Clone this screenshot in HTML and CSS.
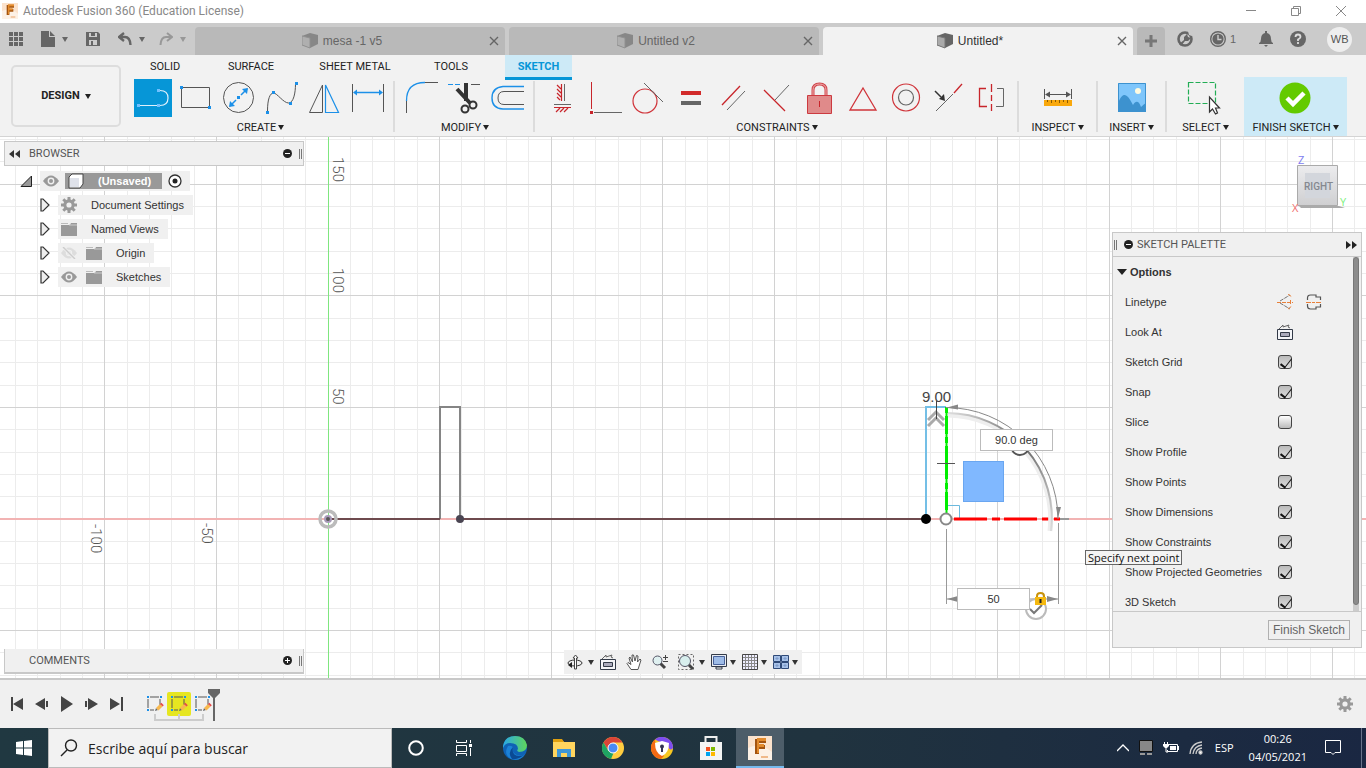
FILE: index.html
```html
<!DOCTYPE html>
<html lang="en">
<head>
  <meta charset="UTF-8" />
  <meta name="viewport" content="width=device-width, initial-scale=1.0"/>
  <title>Autodesk Fusion 360 (Education License)</title>
  <link rel="stylesheet" href="styles.css">
</head>
<body>
  <!-- shared icons -->
  <svg class="defs" width="0" height="0" aria-hidden="true">
    <symbol id="i-cube" viewBox="0 0 16 16">
      <path d="M0 3 8 0l8 2v9l-8 4-8-3z" fill="#666"/>
      <path d="M0 3l8 2v10l-8-3z" fill="#aaa" stroke="#777"/>
    </symbol>
    <symbol id="i-close" viewBox="0 0 10 10"><path d="M1 1l8 8M9 1L1 9" stroke="currentColor" stroke-width="1.4"/></symbol>
    <symbol id="i-eye" viewBox="0 0 16 12">
      <path d="M0 6Q8-5 16 6 8 17 0 6z" fill="#999"/><circle cx="8" cy="6" r="3.4" fill="#f0f0f0"/><circle cx="8" cy="6" r="2" fill="#999"/>
    </symbol>
    <symbol id="i-eye-off" viewBox="0 0 16 12">
      <path d="M0 6Q8-5 16 6 8 17 0 6z" fill="#ddd"/><circle cx="8" cy="6" r="3.2" fill="#f0f0f0"/><circle cx="8" cy="6" r="2" fill="#ddd"/><path d="M2 0l12 12" stroke="#f0f0f0" stroke-width="3"/><path d="M2 0l12 12" stroke="#ccc" stroke-width="1.4"/>
    </symbol>
    <symbol id="i-folder" viewBox="0 0 16 13"><path d="M0 2h9l1-2h6v13H0z" fill="#999"/><path d="M0 0h7v1H0z" fill="#bbb"/><path d="M8 2h8" stroke="#ccc"/></symbol>
    <symbol id="i-gear" viewBox="0 0 16 16">
      <path d="M8 0v16M0 8h16M2.3 2.3l11.4 11.4M13.7 2.3L2.3 13.7" stroke="#999" stroke-width="3"/><circle cx="8" cy="8" r="4.2" fill="none" stroke="#999" stroke-width="3"/><circle cx="8" cy="8" r="2.6" fill="#f0f0f0"/>
    </symbol>
    <symbol id="i-expand" viewBox="0 0 10 14"><path d="M1 1h2l6 6-6 6H1z" fill="#eee" stroke="#333" stroke-width="1.2"/></symbol>
    <symbol id="i-lookat" viewBox="0 0 16 16">
      <path d="M.5 5.5h15v10H.5z" fill="#f4f5f8" stroke="#333a48"/><path d="M3.500 8.500h9v4h-9z" fill="#aab" stroke="#333a48"/><path d="M2 5l4-4v2l6-2-1 2 2 1" fill="none" stroke="#666"/>
    </symbol>
    <symbol id="i-sketch" viewBox="0 0 18 18">
      <path d="M4 2h9M2 4v9M14 4v6M4 15h4" stroke="#555" fill="none"/>
      <path d="M1 1h2v2H1zM14 1h2v2h-2zM1 14h2v2H1z" fill="#1c90e8"/>
      <path d="M9 16l1-3 2 2z" fill="#666"/><path d="M10 13l4-4 2.5 2.5-4 4z" fill="#f8b84e"/><path d="M14 9l1.4-1.2 2.4 2.4-1.3 1.3z" fill="#e84a4a"/>
    </symbol>
    <symbol id="i-fusion" viewBox="0 0 24 24">
      <path d="M0 0h24v24H0z" fill="#fbe2cc"/><path d="M0 12q12-6 24 4v8H0z" fill="#fff" opacity=".5"/>
      <path d="M7 3h11v4h-7v2h6v4h-6v5H7z" fill="#a4540f"/><path d="M9 2h9v3h-7v3h5v3h-5v6H9z" fill="#e28a2c"/><path d="M13 20h7v2h-7z" fill="#f0b98a"/>
    </symbol>
  </svg>

  <header class="titlebar">
    <svg class="logo" width="16" height="16"><use href="#i-fusion"/></svg>
    <h1>Autodesk Fusion 360 (Education License)</h1>
    <div class="window-buttons">
      <button aria-label="Minimize"><svg width="12" height="12"><path d="M1 5.5h10" stroke="#888"/></svg></button>
      <button aria-label="Restore"><svg width="12" height="12"><path d="M1.5 3.5h7v7h-7zM3.5 3V1.5h7v7H9" fill="none" stroke="#888"/></svg></button>
      <button aria-label="Close"><svg width="12" height="12"><path d="M1 1l10 10M11 1L1 11" stroke="#888"/></svg></button>
    </div>
  </header>

  <nav class="tabstrip">
    <div class="quick">
      <button aria-label="Data panel"><svg width="14" height="14" fill="#666"><path d="M0 0h4v4H0zM5 0h4v4H5zM10 0h4v4h-4zM0 5h4v4H0zM5 5h4v4H5zM10 5h4v4h-4zM0 10h4v4H0zM5 10h4v4H5zM10 10h4v4h-4z"/></svg></button>
      <button aria-label="File"><svg width="14" height="16" fill="#666"><path d="M0 0h8v6h6v10H0zM9 0l5 5H9z"/></svg><i class="caret"></i></button>
      <button aria-label="Save"><svg width="14" height="14"><path d="M0 0h12l2 2v12H0z" fill="#666"/><path d="M3 1h8v4H3zM3 8h8v5H3z" fill="#ccc"/><path d="M5 1h4v3H5zM5 9h2v4H5z" fill="#666"/></svg></button>
      <button aria-label="Undo"><svg width="14" height="14"><path d="M6 1L1 5l5 4M1 5h6q5 0 5.5 8" fill="none" stroke="#666" stroke-width="2.4"/></svg><i class="caret"></i></button>
      <button class="faded" aria-label="Redo"><svg width="14" height="14"><path d="M8 1l5 4-5 4M13 5H7Q2 5 1.5 13" fill="none" stroke="#666" stroke-width="2"/></svg><i class="caret"></i></button>
    </div>
    <div class="tabs">
      <div class="tab"><a href="#"><svg width="16" height="16"><use href="#i-cube"/></svg>mesa -1 v5</a><button aria-label="Close mesa -1 v5"><svg width="10" height="10"><use href="#i-close"/></svg></button></div>
      <div class="tab"><a href="#"><svg width="16" height="16"><use href="#i-cube"/></svg>Untitled v2</a><button aria-label="Close Untitled v2"><svg width="10" height="10"><use href="#i-close"/></svg></button></div>
      <div class="tab active"><a href="#"><svg width="16" height="16"><use href="#i-cube"/></svg>Untitled*</a><button aria-label="Close Untitled"><svg width="10" height="10"><use href="#i-close"/></svg></button></div>
      <button class="new-tab" aria-label="New design"><svg width="14" height="14"><path d="M7 1v12M1 7h12" stroke="#777" stroke-width="3"/></svg></button>
    </div>
    <div class="account">
      <button aria-label="Extensions"><svg width="16" height="16"><circle cx="8" cy="8" r="6.5" fill="none" stroke="#666" stroke-width="2.6"/><path d="M2 13l5-4V6l3-3 1 3 3 1-3 3H8l-4 5z" fill="#666"/><path d="M11 0l5 1-1 4-3-1z" fill="#cbcbcb"/></svg></button>
      <button aria-label="Job status"><svg width="16" height="16"><circle cx="8" cy="8" r="7.3" fill="none" stroke="#666" stroke-width="1.4"/><circle cx="8" cy="8" r="5.6" fill="#666"/><path d="M8 4v4.5h3.5" fill="none" stroke="#ccc" stroke-width="1.4"/></svg>1</button>
      <button class="bell" aria-label="Notifications"><svg width="14" height="16" fill="#666"><path d="M6 0h2v2q4 1 4 6 0 3 2 4v1H0v-1q2-1 2-4 0-5 4-6zM5 14h4l-2 2z"/></svg></button>
      <button aria-label="Help"><svg width="16" height="16"><circle cx="8" cy="8" r="8" fill="#666"/><path d="M5.5 6q0-2.500 2.500-2.500T10.500 6Q10.500 7 8 8.500V10M8 11v2" fill="none" stroke="#ddd" stroke-width="1.8"/></svg></button>
      <button class="avatar">WB</button>
    </div>
  </nav>

  <section class="ribbon">
    <button class="workspace">DESIGN<i class="caret"></i></button>
    <div class="ribbon-main">
      <nav class="ribbon-tabs">
        <a href="#" class="w-solid">SOLID</a>
        <a href="#" class="w-surface">SURFACE</a>
        <a href="#" class="w-metal">SHEET METAL</a>
        <a href="#" class="w-tools">TOOLS</a>
        <a href="#" class="current">SKETCH</a>
      </nav>
      <div class="groups">
        <div class="group">
          <div class="tools">
            <button class="on" aria-label="Line"><svg width="38" height="38"><path d="M6 26.500h17M26 11.500q8 0 8 7.500t-8 7.500" fill="none" stroke="#dff0fb" stroke-width="1.2"/><path d="M3 25h3v3H3zM23 25h3v3h-3zM23 10h3v3h-3z" fill="#6fc0ff"/></svg></button>
            <button aria-label="Rectangle"><svg width="38" height="38"><path d="M4.5 8.500h28v20h-28z" fill="none" stroke="#555"/><path d="M3 7h3v3H3zM31 27h3v3h-3z" fill="#1c90e8"/></svg></button>
            <button aria-label="Circle"><svg width="38" height="38"><circle cx="18.500" cy="18.500" r="15" fill="none" stroke="#555"/><path d="M10 27l6-6M21 16l6-6" stroke="#1c90e8" stroke-width="1.500"/><path d="M9 28l1-6 5 5zM28 9l-1 6-5-5zM17 17h3v3h-3z" fill="#1c90e8"/></svg></button>
            <button aria-label="Spline"><svg width="38" height="38"><path d="M4.5 32C4.500 20 7 14 10.500 14s10 10 15 10 7-10 7-19" fill="none" stroke="#555"/><path d="M3 32h3v3H3zM9 12h3v3H9zM26 23h3v3h-3zM32 3h3v3h-3z" fill="#1c90e8"/></svg></button>
            <button aria-label="Mirror"><svg width="38" height="38" fill="none"><path d="M16.5 6v27.500h-13z" stroke="#555"/><path d="M19.500 6v27.500h13z" stroke="#1c90e8" stroke-width="1.2"/></svg></button>
            <button aria-label="Sketch dimension"><svg width="38" height="38"><path d="M3.5 5v28M34.500 5v28" stroke="#555"/><path d="M6 13.500h26" stroke="#1c90e8" stroke-width="1.500"/><path d="M4 13.500l4-3v6zM34 13.500l-4-3v6z" fill="#1c90e8"/></svg></button>
          </div>
          <button class="group-name">CREATE<i class="caret"></i></button>
        </div>
        <i class="sep"></i>
        <div class="group">
          <div class="tools">
            <button aria-label="Fillet"><svg width="38" height="38" fill="none"><path d="M3.5 34V22M22 3.500h13" stroke="#555"/><path d="M3.500 22q0-18.500 18.500-18.500" stroke="#1c90e8" stroke-width="1.300"/></svg></button>
            <button aria-label="Trim"><svg width="38" height="38" fill="none"><path d="M2 5.500h13" stroke="#1c90e8" stroke-dasharray="5 2"/><path d="M25 5.500h9" stroke="#555"/><path d="M20 4v18M11 10l13 14" stroke="#333" stroke-width="4"/><circle cx="19" cy="30" r="3.500" stroke="#333" stroke-width="2"/><circle cx="27" cy="26" r="3.500" stroke="#333" stroke-width="2"/></svg></button>
            <button aria-label="Offset"><svg width="38" height="38" fill="none"><path d="M35 7.500H14q-11 1-11 11.500t11 11h21" stroke="#1c90e8" stroke-width="1.400"/><path d="M35 12.500H15q-6 0-6 6.500t6 6.500h20" stroke="#555"/></svg></button>
          </div>
          <button class="group-name">MODIFY<i class="caret"></i></button>
        </div>
        <i class="sep"></i>
        <div class="group">
          <div class="tools">
            <button aria-label="Horizontal/Vertical"><svg width="38" height="38" fill="none"><path d="M18.5 5v17M14 6l4 4M14 10l4 4M14 14l4 4M14 18l3 3M11 28.500h17M13 33l4-4M17 33l4-4M21 33l4-4" stroke="#c8252b" stroke-width="1.200"/><path d="M21.500 5v17M11 25.500h17" stroke="#666"/></svg></button>
            <button aria-label="Coincident"><svg width="38" height="38" fill="none"><path d="M5.5 3v27" stroke="#c8252b"/><path d="M4 32h3v3H4z" fill="#c8252b"/><path d="M8 33.500h28" stroke="#666"/></svg></button>
            <button aria-label="Tangent"><svg width="38" height="38" fill="none"><circle cx="16" cy="22" r="12" stroke="#d0343a" stroke-width="1.200"/><path d="M15 4l19 19" stroke="#666"/></svg></button>
            <button aria-label="Equal"><svg width="38" height="38"><path d="M9 12h20v4H9z" fill="#d22b2b"/><path d="M9 22h20v4H9z" fill="#666"/></svg></button>
            <button aria-label="Parallel"><svg width="38" height="38"><path d="M7 26L25 7" stroke="#c8252b" stroke-width="1.300"/><path d="M12 31l18-19" stroke="#666"/></svg></button>
            <button aria-label="Perpendicular"><svg width="38" height="38"><path d="M6 11l21 21" stroke="#c8252b" stroke-width="1.300"/><path d="M17 21L31 6" stroke="#666"/></svg></button>
            <button aria-label="Fix"><svg width="38" height="38"><path d="M12 17v-6q0-6 6.500-6t6.500 6v6" fill="none" stroke="#d0444a" stroke-width="3"/><path d="M12 17v-6q0-6 6.500-6t6.500 6v6" fill="none" stroke="#f0b0b0"/><path d="M6.500 16.500h24v18h-24z" fill="#e08a8a" stroke="#cc3a40"/><path d="M18.500 22v6" stroke="#c8252b"/></svg></button>
            <button aria-label="Midpoint"><svg width="38" height="38"><path d="M19 9l13 22H6z" fill="none" stroke="#d0343a" stroke-width="1.300"/></svg></button>
            <button aria-label="Concentric"><svg width="38" height="38" fill="none"><circle cx="19" cy="18.500" r="13.500" stroke="#d0343a" stroke-width="1.200"/><circle cx="19" cy="18.500" r="7.500" stroke="#666" stroke-width="1.200"/></svg></button>
            <button aria-label="Collinear"><svg width="38" height="38"><path d="M6 32l17-17" stroke="#666"/><path d="M24 14l8-9" stroke="#c8252b" stroke-width="1.300"/><path d="M5 12l6 6" stroke="#333" stroke-width="1.500"/><path d="M15 22l-1-7-5 5z" fill="#333"/></svg></button>
            <button aria-label="Symmetry"><svg width="38" height="38" fill="none"><path d="M13 9.500H6.500v18H14M18.500 5v8M18.500 16v6M18.500 25v7" stroke="#c8252b" stroke-width="1.300"/><path d="M24 9.500h6.500v18H23" stroke="#666"/></svg></button>
          </div>
          <button class="group-name">CONSTRAINTS<i class="caret"></i></button>
        </div>
        <i class="sep"></i>
        <div class="group single">
          <div class="tools"><button aria-label="Measure"><svg width="38" height="38"><path d="M5.500 10v10M32.500 10v10M8 15.500h22" stroke="#555"/><path d="M6 15.500l5-3v6zM32 15.500l-5-3v6z" fill="#555"/><path d="M5 21h28v6H5z" fill="#f9a80c"/><path d="M8.500 21v2M12.500 21v3M16.500 21v2M20.500 21v3M24.500 21v2M28.500 21v3" stroke="#8a5a00"/></svg></button></div>
          <button class="group-name">INSPECT<i class="caret"></i></button>
        </div>
        <i class="sep"></i>
        <div class="group single narrow">
          <div class="tools"><button aria-label="Insert image"><svg width="38" height="38"><path d="M5 4h28v29H5z" fill="#7fc6fb"/><circle cx="25" cy="12" r="3" fill="#fffbe0"/><path d="M5 24c5-12 9-10 15 2 3-5 6-4 8 2q3-3 5-4v9H5z" fill="#3d92cf"/><path d="M5.500 4.500h27v28h-27z" fill="none" stroke="#3d92cf"/></svg></button></div>
          <button class="group-name">INSERT<i class="caret"></i></button>
        </div>
        <i class="sep"></i>
        <div class="group single">
          <div class="tools"><button aria-label="Select"><svg width="38" height="38"><path d="M1.500 3.500h27v21h-27z" fill="none" stroke="#22ad55" stroke-width="1.200" stroke-dasharray="5 2"/><path d="M22.500 18v15l3-3 3 5 2-1-2-5h4z" fill="#fff" stroke="#333" stroke-width="1.200"/></svg></button></div>
          <button class="group-name">SELECT<i class="caret"></i></button>
        </div>
        <div class="group single finish">
          <div class="tools"><button aria-label="Finish"><svg width="38" height="38"><circle cx="18" cy="19" r="15.500" fill="#63ca00"/><path d="M10 19l6 6L27 14" fill="none" stroke="#fff" stroke-width="4.500"/></svg></button></div>
          <button class="group-name">FINISH SKETCH<i class="caret"></i></button>
        </div>
      </div>
    </div>
  </section>

  <main class="canvas">
    <svg class="drawing" width="100%" height="100%">
      <defs>
        <linearGradient id="arc" x1="0" y1="0" x2="1" y2="1">
          <stop offset="0" stop-color="#ddd"/><stop offset=".5" stop-color="#666"/><stop offset="1" stop-color="#ddd"/>
        </linearGradient>
      </defs>
      <g id="grid"></g>
      <!-- model space, origin in the middle of the origin marker -->
      <g transform="translate(328 382)" fill="none">
        <path d="M-328 0H3000" stroke="#f2b3b3" stroke-width="2"/>
        <path d="M.5-382V2000" stroke="#7fe67f"/>
        <g class="ruler">
          <text transform="translate(5 -362) rotate(90)">150</text>
          <text transform="translate(5 -251) rotate(90)">100</text>
          <text transform="translate(5 -131) rotate(90)">50</text>
          <text transform="translate(-237 5) rotate(90)">-100</text>
          <text transform="translate(-126 4) rotate(90)">-50</text>
        </g>
        <path d="M112 0v-112h20V0" stroke="#858585" stroke-width="2"/>
        <path d="M0 0h112M132 0h466" stroke="#6e4a4e" stroke-width="2"/>
        <circle r="8" stroke="#bbb" stroke-width="3.500"/><circle r="3" fill="#555" stroke="#a79ab8" stroke-width="2"/>
        <circle cx="132" r="4" fill="#4a4552"/>

        <path d="M598 0v-112h20" stroke="#74bfe6" stroke-width="2"/>
        <path d="M618-13.500h13.500V0" stroke="#6cb9dd"/>
        <rect x="635.500" y="-57.500" width="40" height="40" fill="#80b8ff" stroke="#6aa6f0"/>
        <path d="M618.500-112V0" stroke="#0e0" stroke-width="3" stroke-dasharray="6 3 18 3 6 3 33 4"/>
        <path d="M618.500-112V0" stroke="#0e0" stroke-width="2"/>
        <path d="M609-55.500h18" stroke="#555"/>
        <path d="M732 0h9" stroke="#999" stroke-width="2"/>
        <path d="M626 0h106" stroke="#f00" stroke-width="3" stroke-dasharray="33 5 8 4"/>
        <circle cx="598" r="5" fill="#000"/>
        <circle cx="618" r="5.500" fill="#fff" stroke="#888" stroke-width="2"/>

        <!-- angle dimension -->
        <path d="M618-111.500A112 112 0 0 1 730 0" stroke="#888"/>
        <path d="M620-104A104 104 0 0 1 722 12" stroke="#eee" stroke-width="5"/>
        <path d="M620-106A105 105 0 0 1 723 12" stroke="url(#arc)" stroke-width="2"/>
        <path d="M619-111.500l11-3v5zM730-1l-2-11h5z" fill="#888"/>
        <circle cx="692" cy="-73" r="9" fill="#fff" stroke="#555" stroke-width="2"/>
        <path d="M600-93l8-8 8 8M600-99l8-8 8 8" stroke="#aaa" stroke-width="3"/>
        <path d="M608.500-118v18" stroke="#444"/>
        <text class="dim" x="594" y="-117">9.00</text>

        <!-- length dimension -->
        <path d="M618.500 10v75M730.500 4v81M618 80h112" stroke="#999"/>
        <path d="M619 80l11-3v6zM730 80l-11-3v6z" fill="#888"/>
        <circle cx="708" cy="90" r="10" fill="#fff" stroke="#bbb" stroke-width="2"/>
        <path d="M702 90l4 4 8-8" stroke="#777" stroke-width="2"/>
        <path d="M709 79v-2q0-3 3.500-3t3.500 3v2" stroke="#c8920a" stroke-width="2"/>
        <path d="M707 78h11v8h-11z" fill="#f5b90f"/><path d="M712.500 80v4" stroke="#222" stroke-width="2"/>
      </g>
    </svg>
    <input class="value angle" type="text" value="90.0 deg" aria-label="Angle">
    <input class="value length" type="text" value="50" aria-label="Length">

    <div class="left">
      <section class="browser">
        <header class="panel-bar">
          <svg width="11" height="8"><path d="M5 0v8L0 4zM11 0v8L6 4z" fill="#333"/></svg>
          <h2>BROWSER</h2>
          <svg width="9" height="9"><circle cx="4.500" cy="4.500" r="4.500" fill="#222"/><path d="M2 4.500h5" stroke="#fff"/></svg>
          <i class="grip"></i>
        </header>
        <ul class="tree">
          <li class="root">
            <svg width="12" height="12"><path d="M11.500 1v10.500H1z" fill="#999" stroke="#222"/></svg>
            <span><svg width="16" height="12"><use href="#i-eye"/></svg><b><svg width="16" height="16"><path d="M1 4l3-3h11v10l-3 4H1z" fill="#fff" stroke="#444"/><path d="M2 5h9v9H2z" fill="#dfe2ea"/></svg>(Unsaved)</b><svg width="14" height="14"><circle cx="7" cy="7" r="6" fill="#fff" stroke="#333" stroke-width="1.300"/><circle cx="7" cy="7" r="2.500" fill="#222"/></svg></span>
          </li>
          <li><svg width="10" height="14"><use href="#i-expand"/></svg><span><svg width="16" height="16"><use href="#i-gear"/></svg><em>Document Settings</em></span></li>
          <li><svg width="10" height="14"><use href="#i-expand"/></svg><span><svg width="16" height="13"><use href="#i-folder"/></svg><em>Named Views</em></span></li>
          <li><svg width="10" height="14"><use href="#i-expand"/></svg><span><svg width="16" height="12"><use href="#i-eye-off"/></svg><svg width="16" height="13"><use href="#i-folder"/></svg><em>Origin</em></span></li>
          <li><svg width="10" height="14"><use href="#i-expand"/></svg><span><svg width="16" height="12"><use href="#i-eye"/></svg><svg width="16" height="13"><use href="#i-folder"/></svg><em>Sketches</em></span></li>
        </ul>
      </section>
      <section class="panel-bar comments">
        <h2>COMMENTS</h2>
        <svg width="9" height="9"><circle cx="4.500" cy="4.500" r="4.500" fill="#222"/><path d="M2 4.500h5M4.500 2v5" stroke="#fff"/></svg>
        <i class="grip"></i>
      </section>
    </div>

    <div class="navbar">
      <button aria-label="Orbit"><svg width="16" height="16" fill="none"><ellipse cx="8" cy="9" rx="7" ry="3" stroke="#333"/><path d="M7.500 15V4H6l2.500-3L11 4H9.500v11z" fill="#fff" stroke="#444"/><path d="M1 11l4-3v6z" fill="#222"/></svg><i class="caret"></i></button>
      <button class="plain" aria-label="Look at"><svg width="16" height="16"><use href="#i-lookat"/></svg></button>
      <button class="plain" aria-label="Pan"><svg width="16" height="16"><path d="M5 15.500L1 9.500l1-1 3 2L3 4l1-1 2.500 5L6 1h1.500L9 7l1.500-5.500 1.500.5-.5 6L14 5l1 1-3 9.500z" fill="#fff" stroke="#555"/></svg></button>
      <button class="plain" aria-label="Zoom"><svg width="16" height="16"><path d="M8 9l5 5" stroke="#444" stroke-width="3"/><circle cx="5.500" cy="6.500" r="4.500" fill="#dff0f0" stroke="#556"/><path d="M11 3.500h5M13.500 1v5M11 7.500h5" stroke="#444"/></svg></button>
      <button aria-label="Fit"><svg width="16" height="16"><path d="M.5.5h15v15H.5z" fill="none" stroke="#666" stroke-dasharray="2 2"/><path d="M10 10l5 5" stroke="#444" stroke-width="3"/><circle cx="7" cy="7" r="5.500" fill="#d8efee" stroke="#556"/></svg><i class="caret"></i></button>
      <button class="tight" aria-label="Display settings"><svg width="16" height="16"><path d="M.5.5h15v12H.5z" fill="#e8ecf2" stroke="#333a48"/><path d="M2.500 2.500h11v8h-11z" fill="#9ebce8" stroke="#48629a"/><path d="M5 13h6v2H5z" fill="#fff" stroke="#333a48"/></svg><i class="caret"></i></button>
      <button class="tight" aria-label="Grid and snaps"><svg width="16" height="16"><path d="M.5.5h15v15H.5z" fill="#eef" stroke="#444"/><path d="M3.500 1v14M6.500 1v14M9.500 1v14M12.500 1v14M1 3.500h14M1 6.500h14M1 9.500h14M1 12.500h14" stroke="#888"/></svg><i class="caret"></i></button>
      <button class="tight" aria-label="Viewports"><svg width="16" height="14" fill="#a8c2e8" stroke="#2f4a78"><path d="M.5.5h7v6h-7zM8.500.5h7v6h-7zM.5 7.500h7v6h-7zM8.500 7.500h7v6h-7z"/><path d="M3 3h2v1H3zM11 3h2v1h-2zM3 10h2v1H3zM11 10h2v1h-2z" stroke="#7a98c8"/></svg><i class="caret"></i></button>
    </div>

    <div class="right">
      <svg class="viewcube" width="64" height="64">
        <defs><linearGradient id="cube" x2="0" y2="1"><stop stop-color="#ececee"/><stop offset="1" stop-color="#cfcfd1"/></linearGradient></defs>
        <path d="M12 56h40l6 2H14z" fill="#aaa"/>
        <path d="M10.500 15.500h40v40h-40z" fill="url(#cube)" stroke="#aaa"/>
        <path d="M18 23h25v25H18z" fill="#d3d6dc"/>
        <text x="17" y="40" class="face">RIGHT</text>
        <text x="11" y="14" fill="#8080f0">Z</text><text x="5" y="62" fill="#f07070">X</text><text x="53" y="56" fill="#80f080">Y</text>
      </svg>
      <section class="palette">
        <header>
          <i class="grip"></i>
          <svg width="9" height="9"><circle cx="4.500" cy="4.500" r="4.500" fill="#222"/><path d="M2 4.500h5" stroke="#fff"/></svg>
          <h2>SKETCH PALETTE</h2>
          <svg width="11" height="8"><path d="M0 0v8l5-4zM6 0v8l5-4z" fill="#222"/></svg>
        </header>
        <div class="palette-body">
          <div class="rows">
            <h3><i></i>Options</h3>
            <div class="row"><span>Linetype</span>
              <button aria-label="Construction"><svg width="16" height="16" fill="none"><path d="M3 7l10-6M3 9l10 6" stroke="#777" stroke-dasharray="4 1"/><path d="M0 8.500h16M13.500 6v5M11 0l4 3M11 15l4-3" stroke="#e8803a" stroke-dasharray="4 1"/></svg></button>
              <button aria-label="Centerline"><svg width="16" height="16" fill="none"><path d="M1.500 6V4q0-3 3-3H10v2h4.500v3M1.500 10v2q0 3 3 3H10v-2h4.500v-3" stroke="#555" stroke-width="1.200"/><path d="M0 8.500h16" stroke="#e8803a" stroke-dasharray="5 1 3 1"/></svg></button>
            </div>
            <div class="row"><span>Look At</span><button aria-label="Look At"><svg width="16" height="16"><use href="#i-lookat"/></svg></button></div>
            <div class="row"><label for="o-grid">Sketch Grid</label><input id="o-grid" type="checkbox" checked></div>
            <div class="row"><label for="o-snap">Snap</label><input id="o-snap" type="checkbox" checked></div>
            <div class="row"><label for="o-slice">Slice</label><input id="o-slice" type="checkbox"></div>
            <div class="row"><label for="o-profile">Show Profile</label><input id="o-profile" type="checkbox" checked></div>
            <div class="row"><label for="o-points">Show Points</label><input id="o-points" type="checkbox" checked></div>
            <div class="row"><label for="o-dims">Show Dimensions</label><input id="o-dims" type="checkbox" checked></div>
            <div class="row"><label for="o-cons">Show Constraints</label><input id="o-cons" type="checkbox" checked></div>
            <div class="row"><label for="o-proj">Show Projected Geometries</label><input id="o-proj" type="checkbox" checked></div>
            <div class="row"><label for="o-3d">3D Sketch</label><input id="o-3d" type="checkbox" checked></div>
          </div>
          <div class="scroll"><i></i></div>
        </div>
        <footer><button>Finish Sketch</button></footer>
      </section>
    </div>
    <div class="tooltip" role="tooltip">Specify next point</div>
  </main>

  <section class="timeline">
    <div class="playback">
      <button aria-label="Start"><svg width="14" height="14" fill="#444"><path d="M1 0h2v14H1zM13 1v12L3 7z"/></svg></button>
      <button aria-label="Step back"><svg width="14" height="14" fill="#444"><path d="M10 1v12L0 7zM11 4h2v6h-2z"/></svg></button>
      <button aria-label="Play"><svg width="14" height="16" fill="#444"><path d="M1 0v16l12-8z"/></svg></button>
      <button aria-label="Step forward"><svg width="14" height="14" fill="#444"><path d="M0 4h2v6H0zM3 1v12l10-6z"/></svg></button>
      <button aria-label="End"><svg width="14" height="14" fill="#444"><path d="M0 1v12l10-6zM11 0h2v14h-2z"/></svg></button>
    </div>
    <div class="features">
      <button aria-label="Sketch 1"><svg width="18" height="18"><use href="#i-sketch"/></svg></button>
      <button class="picked" aria-label="Sketch 2"><svg width="18" height="18"><use href="#i-sketch"/></svg></button>
      <button aria-label="Sketch 3"><svg width="18" height="18"><use href="#i-sketch"/></svg></button>
      <svg class="bracket" width="50" height="8"><path d="M1 0v6h48V0M25 0v6" fill="none" stroke="#ccc" stroke-width="2"/></svg>
      <svg class="marker" width="12" height="32"><path d="M0 0h12v4L7 9v23H5V9L0 4z" fill="#666"/></svg>
    </div>
    <button class="settings" aria-label="Timeline settings"><svg width="16" height="16"><use href="#i-gear"/></svg></button>
  </section>

  <footer class="taskbar">
    <button class="start" aria-label="Start menu"><svg width="16" height="16" fill="#fff"><path d="M0 2l7-1v6.500H0zM8 1l8-1v7.500H8zM0 8.500h7V15l-7-1zM8 8.500h8V16l-8-1z"/></svg></button>
    <div class="search">
      <svg width="18" height="18" fill="none" stroke="#222" stroke-width="1.400"><circle cx="11" cy="6.500" r="5.500"/><path d="M7 11l-6 6"/></svg>
      <input type="text" placeholder="Escribe aquí para buscar" aria-label="Buscar">
    </div>
    <div class="system">
      <button aria-label="Cortana"><svg width="16" height="16"><circle cx="8" cy="8" r="6.800" fill="none" stroke="#fff" stroke-width="2"/></svg></button>
      <button aria-label="Task view"><svg width="16" height="16" fill="none" stroke="#fff"><path d="M.5 0v2.500h10V0M.5 5.500h10v6H.5zM.5 16v-2.500h10V16M14.500 0v3M14.500 8v8"/><path d="M13 4h3v3h-3z" fill="#fff" stroke="none"/></svg></button>
    </div>
    <div class="apps">
      <button aria-label="Edge"><svg width="24" height="24"><defs><linearGradient id="edge"><stop stop-color="#2aa8e8"/><stop offset="1" stop-color="#5fd65a"/></linearGradient></defs><circle cx="12" cy="12" r="12" fill="#0f62b5"/><path d="M0 10Q2 0 12 0t12 9q0 7-8 7-3-1-1-3 0-6-8-6-5 0-7 5z" fill="url(#edge)"/><path d="M5 10Q0 18 8 23q9 3 14-5-5 3-10 0-4-3-2-7-3-2-5-1z" fill="#1c82d6"/><path d="M10 11q-2 8 6 9 4 0 6-2-6 6-13 5-5-6 1-12z" fill="#0a4a94"/></svg></button>
      <button aria-label="Explorer"><svg width="22" height="18"><path d="M0 1h9l2 2h11v15H0z" fill="#ffd55e"/><path d="M0 0h9l2 3H0z" fill="#e0a010"/><path d="M4 18V10h14v8h-4v-4H8v4z" fill="#3e97d8"/></svg></button>
      <button aria-label="Chrome"><svg width="22" height="22"><circle cx="11" cy="11" r="11" fill="#ffcd40"/><path d="M1.500 5.500a11 11 0 0 1 19 0H11L6 13z" fill="#db4437"/><path d="M1.500 5.500L6.500 14l5 2-2.500 6A11 11 0 0 1 1.500 5.500z" fill="#1fa463"/><circle cx="11" cy="11" r="5" fill="#4a8af4" stroke="#fff"/></svg></button>
      <button aria-label="Secure browser"><svg width="22" height="22"><circle cx="11" cy="11" r="11" fill="#f8c822"/><path d="M4 2.500A11 11 0 0 1 22 11q-3 4-5-2z" fill="#7d4df0"/><path d="M4 2.500A11 11 0 0 0 10 22l3-3-8-8z" fill="#f46a14"/><path d="M11 4l7 2q0 10-7 13Q4 16 4 6z" fill="#fff"/><circle cx="11" cy="9.500" r="2" fill="#335"/><path d="M10 10h2v5h-2z" fill="#335"/></svg></button>
      <button aria-label="Store"><svg width="24" height="24"><path d="M6.500 7V1h11v6" fill="none" stroke="#eee" stroke-width="2"/><path d="M1 6h22v18H1z" fill="#f4f4f4"/><path d="M7 11h4v4H7z" fill="#f25022"/><path d="M12 11h4v4h-4z" fill="#7fba00"/><path d="M7 16h4v4H7z" fill="#00a4ef"/><path d="M12 16h4v4h-4z" fill="#ffb900"/></svg></button>
      <button class="running" aria-label="Fusion 360"><svg width="24" height="24"><use href="#i-fusion"/></svg></button>
    </div>
    <div class="tray">
      <button aria-label="Hidden icons"><svg width="12" height="8"><path d="M0 7l6-6 6 6" fill="none" stroke="#fff" stroke-width="1.300"/></svg></button>
      <button aria-label="Display"><svg width="14" height="16"><path d="M.5.5h13v11H.5z" fill="#888" stroke="#111"/><path d="M1 13h5v2H1zM8 13h5v2H8z" fill="#999"/></svg></button>
      <button aria-label="Battery"><svg width="16" height="12" fill="none" stroke="#fff"><path d="M6 2.500h8.500v7H4.500V8M15.500 4v4M1.500 0v2M4.500 0v2M3 6v4h2"/><path d="M0 2h6v2L4 6H2L0 4zM7 4h6v4H7z" fill="#fff" stroke="none"/></svg></button>
      <button aria-label="Network"><svg width="14" height="14" fill="none" stroke="#ccc" stroke-width="1.300"><path d="M1 13Q2 2 13 1M4 13q1-8 9-9M7 13q0-5 6-6"/><circle cx="11.500" cy="11.500" r="1.500" fill="#fff"/></svg></button>
      <button class="lang">ESP</button>
      <button class="clock"><time>00:26</time><time>04/05/2021</time></button>
      <button class="notes" aria-label="Notifications"><svg width="16" height="16" fill="none" stroke="#fff"><path d="M.5.5h15v12H10l-2 2-2-2H.5z"/></svg></button>
      <i class="peek"></i>
    </div>
  </footer>
  <script src="script.js"></script>
</body>
</html>
```
FILE: styles.css
```css
:root {
  --panel: #f0f0f0;
  --line: #c8c8c8;
  --text: #333;
  --blue: #0696d7;
  --ui: "Liberation Sans", Arial, sans-serif;
  --caps: Roboto, "Liberation Sans", sans-serif;
  --win: "Open Sans", "Noto Sans", sans-serif;
}
* { box-sizing: border-box; }
body {
  margin: 0;
  min-height: 100vh;
  display: flex;
  flex-direction: column;
  background: #fff;
  color: var(--text);
  font: 11px/16px var(--ui);
}
button {
  margin: 0;
  padding: 0;
  border: none;
  background: none;
  color: inherit;
  font: inherit;
  display: flex;
  align-items: center;
  justify-content: center;
}
a { color: inherit; text-decoration: none; }
h1, h2, h3, ul { margin: 0; padding: 0; font-weight: normal; font-size: 11px; }
em { font-style: normal; }
svg { display: block; flex: none; }
.defs { position: absolute; }
.caret {
  border: 3px solid transparent;
  border-top: 5px solid currentColor;
  border-bottom: 0;
}

/* title bar */
.titlebar {
  height: 23px;
  padding: 0 19px 2px 2px;
  display: flex;
  align-items: center;
  gap: 5px;
}
.titlebar h1 { flex: 1; font: 12px/20px var(--caps); color: #888; }
.window-buttons { display: flex; gap: 33px; }

/* document tabs */
.tabstrip {
  height: 32px;
  background: #cbcbcb;
  display: flex;
  color: #666;
}
.quick {
  width: 195px;
  padding-left: 9px;
  display: flex;
  align-items: center;
  gap: 18px;
}
.quick button { gap: 7px; }
.quick .faded { opacity: .5; }
.quick button:last-child { margin-left: -4px; }
.tabs { flex: 1; display: flex; gap: 4px; padding-top: 4px; }
.tab {
  flex: 1;
  display: flex;
  align-items: center;
  padding-right: 6px;
  background: #b9b9b9;
  border-radius: 4px 4px 0 0;
  font: 12px/16px var(--ui);
}
.tab a { flex: 1; display: flex; justify-content: center; align-items: center; gap: 5px; }
.tab:not(.active) a svg { opacity: .6; }
.tab.active { background: #f2f2f2; color: #333; }
.tab button { width: 10px; color: #666; }
.new-tab { width: 28px; background: #b9b9b9; border-radius: 4px 4px 0 0; }
.account {
  width: 201px;
  display: flex;
  align-items: center;
  padding-left: 12px;
  gap: 17px;
}
.account button { gap: 4px; }
.account .bell { margin-left: 6px; }
.account .avatar {
  width: 25px;
  height: 25px;
  margin-left: 4px;
  border-radius: 50%;
  background: #eee;
  color: #555;
}

/* ribbon */
.ribbon {
  height: 82px;
  display: flex;
  background: #f2f2f2;
  border-bottom: 1px solid #d4d4d4;
  font: 11px/16px var(--caps);
  color: #222;
}
.workspace {
  width: 110px;
  height: 62px;
  margin: 10px 5px 0 11px;
  border: 2px solid #ddd;
  border-radius: 5px;
  font-weight: bold;
  gap: 5px;
}
.ribbon-main { flex: 1; }
.ribbon-tabs { display: flex; height: 22px; }
.ribbon-tabs a { text-align: center; line-height: 23px; }
.w-solid { width: 78px; }
.w-surface { width: 94px; }
.w-metal { width: 114px; }
.w-tools { width: 78px; }
.ribbon-tabs .current {
  width: 67px;
  height: 25px;
  margin-left: 15px;
  background: #cdeaf7;
  border-bottom: 3px solid var(--blue);
  color: var(--blue);
  font-weight: bold;
}
.groups { display: flex; height: 59px; }
.group { padding: 2px 6px 0 8px; display: flex; flex-direction: column; }
.tools { display: flex; justify-content: center; gap: 5px; }
.tools .on { background: var(--blue); }
.group-name { gap: 2px; line-height: 21px; white-space: nowrap; }
.sep { width: 2px; margin: 4px 0; background: #dcdcdc; flex: none; }
.single { width: 77px; padding: 2px 0 0; }
.single.narrow { width: 67px; }
.single.finish { width: 103px; background: #cdeaf7; }

/* canvas */
.canvas {
  position: relative;
  flex: 1;
  min-height: 541px;
  padding: 4px;
  display: grid;
  grid-template-columns: 300px 1fr 300px;
}
.drawing { position: absolute; left: 0; top: 0; }
.drawing .ruler { font: 15px var(--caps); font-weight: 300; fill: #555; }
.drawing .dim { font: 15px var(--ui); fill: #444; }
.minor { stroke: #ececec; }
.major { stroke: #d2d2d2; }
.left, .navbar, .right { position: relative; }
.left { display: flex; flex-direction: column; justify-content: space-between; }
.value {
  position: absolute;
  width: 73px;
  height: 22px;
  border: 1px solid #bbb;
  background: #fff;
  color: var(--text);
  text-align: center;
  font: 11px var(--ui);
}
.angle { left: 980px; top: 292px; }
.length { left: 957px; top: 451px; }
.tooltip {
  position: absolute;
  left: 1085px;
  top: 413px;
  padding: 0 2px;
  border: 1px solid #666;
  background: #f4f4f4;
  color: #111;
  font: 11px/13px var(--win);
}
.panel-bar {
  height: 25px;
  display: flex;
  align-items: center;
  padding: 0 1px 0 8px;
  background: var(--panel);
  border: 1px solid var(--line);
  color: #555;
}
.panel-bar h2, .palette h2 { flex: 1; font-family: var(--caps); }
.browser .panel-bar { padding-left: 4px; }
.browser .panel-bar h2 { margin-left: 9px; }
.comments { border-top: none; border-bottom-width: 2px; }
.comments h2 { margin-left: 16px; }
.grip { width: 3px; height: 10px; border: solid #777; border-width: 0 1px; }
.panel-bar .grip { margin-left: 7px; }
.tree { list-style: none; padding: 3px 0 0 36px; }
.tree li { height: 24px; display: flex; align-items: center; gap: 8px; }
.tree li span {
  height: 20px;
  display: flex;
  align-items: center;
  gap: 9px;
  padding: 0 9px 0 3px;
  background: var(--panel);
}
.tree em { margin-left: 5px; }
.tree .root { margin-left: -20px; }
.tree .root span { gap: 6px; padding: 0 8px 0 3px; }
.tree b {
  height: 16px;
  padding: 0 11px 0 3px;
  display: flex;
  align-items: center;
  gap: 14px;
  background: #999;
  color: #fff;
}

.navbar {
  align-self: end;
  justify-self: center;
  height: 24px;
  padding: 0 4px 0 3px;
  display: flex;
  align-items: center;
  gap: 6px;
  background: var(--panel);
}
.navbar button { gap: 5px; }
.navbar .plain { padding-right: 4px; }
.navbar .tight { gap: 3px; }

.right { display: flex; flex-direction: column; align-items: flex-end; }
.viewcube { margin: 9px 11px 18px 0; font: 11px var(--win); }
.face { font: 500 10px var(--caps); fill: #85888f; }
.palette { width: 250px; background: var(--panel); border: 1px solid var(--line); color: var(--text); }
.palette header {
  height: 24px;
  display: flex;
  align-items: center;
  gap: 4px;
  padding: 0 4px 0 1px;
  border-bottom: 1px solid var(--line);
  color: #555;
}
.palette header svg:first-of-type { margin-left: 3px; }
.palette-body { height: 354px; display: flex; overflow: hidden; }
.rows { flex: 1; }
.rows h3 {
  height: 30px;
  padding-left: 4px;
  display: flex;
  align-items: center;
  gap: 3px;
  font-weight: bold;
}
.rows h3 i { border: 5px solid transparent; border-top: 6px solid #222; border-bottom: 0; }
.row { height: 30px; padding-left: 12px; display: flex; align-items: center; }
.row span, .row label { width: 152px; white-space: nowrap; }
.row button + button { margin-left: 13px; }
.row input {
  appearance: none;
  width: 14px;
  height: 14px;
  margin: 0 0 0 1px;
  border: 1px solid #444;
  border-radius: 3px;
  background: linear-gradient(#fff, #bbb);
}
.row input:checked { background: linear-gradient(#bbb, #ddd); }
.row input:checked::after {
  content: "";
  display: block;
  width: 5px;
  height: 10px;
  margin: 0 0 0 4px;
  border: solid #111;
  border-width: 0 1px 2px 0;
  transform: rotate(38deg);
}
.scroll { width: 6px; margin-right: 2px; background: #ccc; }
.scroll i { display: block; height: 348px; background: #8c8c8c; border: 1px solid #777; border-radius: 3px; }
.palette footer {
  height: 36px;
  padding: 0 11px;
  border-top: 1px solid var(--line);
  display: flex;
  align-items: center;
  justify-content: flex-end;
}
.palette footer button {
  height: 20px;
  padding: 0 4px;
  border: 1px solid #b0b0b0;
  color: #666;
  font: 12px var(--ui);
}

/* timeline */
.timeline {
  height: 50px;
  border-top: 2px solid var(--line);
  background: var(--panel);
  display: flex;
  align-items: center;
  padding: 0 13px 0 10px;
}
.playback { display: flex; align-items: center; gap: 11px; width: 132px; }
.features { position: relative; display: flex; gap: 0; flex: 1; margin-left: 1px; }
.features button { width: 24px; height: 24px; border-radius: 2px; }
.features .picked { background: #e6e621; }
.bracket { position: absolute; left: 11px; top: 22px; }
.marker { position: absolute; left: 65px; top: -3px; }

/* windows taskbar */
.taskbar {
  height: 40px;
  display: flex;
  background: linear-gradient(90deg, #203841, #20333f 60%, #1a2742);
  color: #fff;
  font: 11px/18px var(--win);
}
.start { width: 48px; }
.search {
  width: 344px;
  padding-left: 11px;
  display: flex;
  align-items: center;
  gap: 8px;
  background: #f2f2f2;
  border: 1px solid #bbb;
}
.search input {
  flex: 1;
  border: none;
  background: none;
  font: 14px var(--win);
}
.search input::placeholder { color: #222; }
.system, .apps, .tray { display: flex; }
.system button, .apps button { width: 48px; }
.apps { margin-left: 3px; gap: 1px; flex: 1; }
.running { background: #4d5d69; border-bottom: 2px solid #76b9ed; padding-top: 2px; }
.tray { align-items: center; gap: 10px; }
.tray .lang { margin-left: 2px; }
.clock { flex-direction: column; margin-left: 5px; }
.notes { margin: 0 10px 0 8px; }
.peek { width: 1px; height: 40px; margin-right: 4px; background: #68738a; }
```
FILE: script.js
```javascript
const grid = document.getElementById("grid");
const STEP = 22.32;     // px per 10 mm
const ORIGIN = { x: 328, y: 382 };

function addLine(x1, y1, x2, y2, cls) {
  const line = document.createElementNS("http://www.w3.org/2000/svg", "line");
  line.setAttribute("x1", x1);
  line.setAttribute("y1", y1);
  line.setAttribute("x2", x2);
  line.setAttribute("y2", y2);
  line.setAttribute("class", cls);
  grid.appendChild(line);
}

function drawGrid() {
  const w = grid.ownerSVGElement.clientWidth;
  const h = grid.ownerSVGElement.clientHeight;
  grid.innerHTML = "";
  ["minor", "major"].forEach(cls => {
    for (let i = Math.ceil(-ORIGIN.x / STEP); ORIGIN.x + i * STEP < w; i++) {
      const x = Math.floor(ORIGIN.x + i * STEP) + 0.5;
      if ((i % 5 === 0) === (cls === "major")) addLine(x, 0, x, h, cls);
    }
    for (let i = Math.ceil(-ORIGIN.y / STEP); ORIGIN.y + i * STEP < h; i++) {
      const y = Math.floor(ORIGIN.y + i * STEP) + 0.5;
      if ((i % 5 === 0) === (cls === "major")) addLine(0, y, w, y, cls);
    }
  });
}

drawGrid();
window.addEventListener("resize", drawGrid);
```
